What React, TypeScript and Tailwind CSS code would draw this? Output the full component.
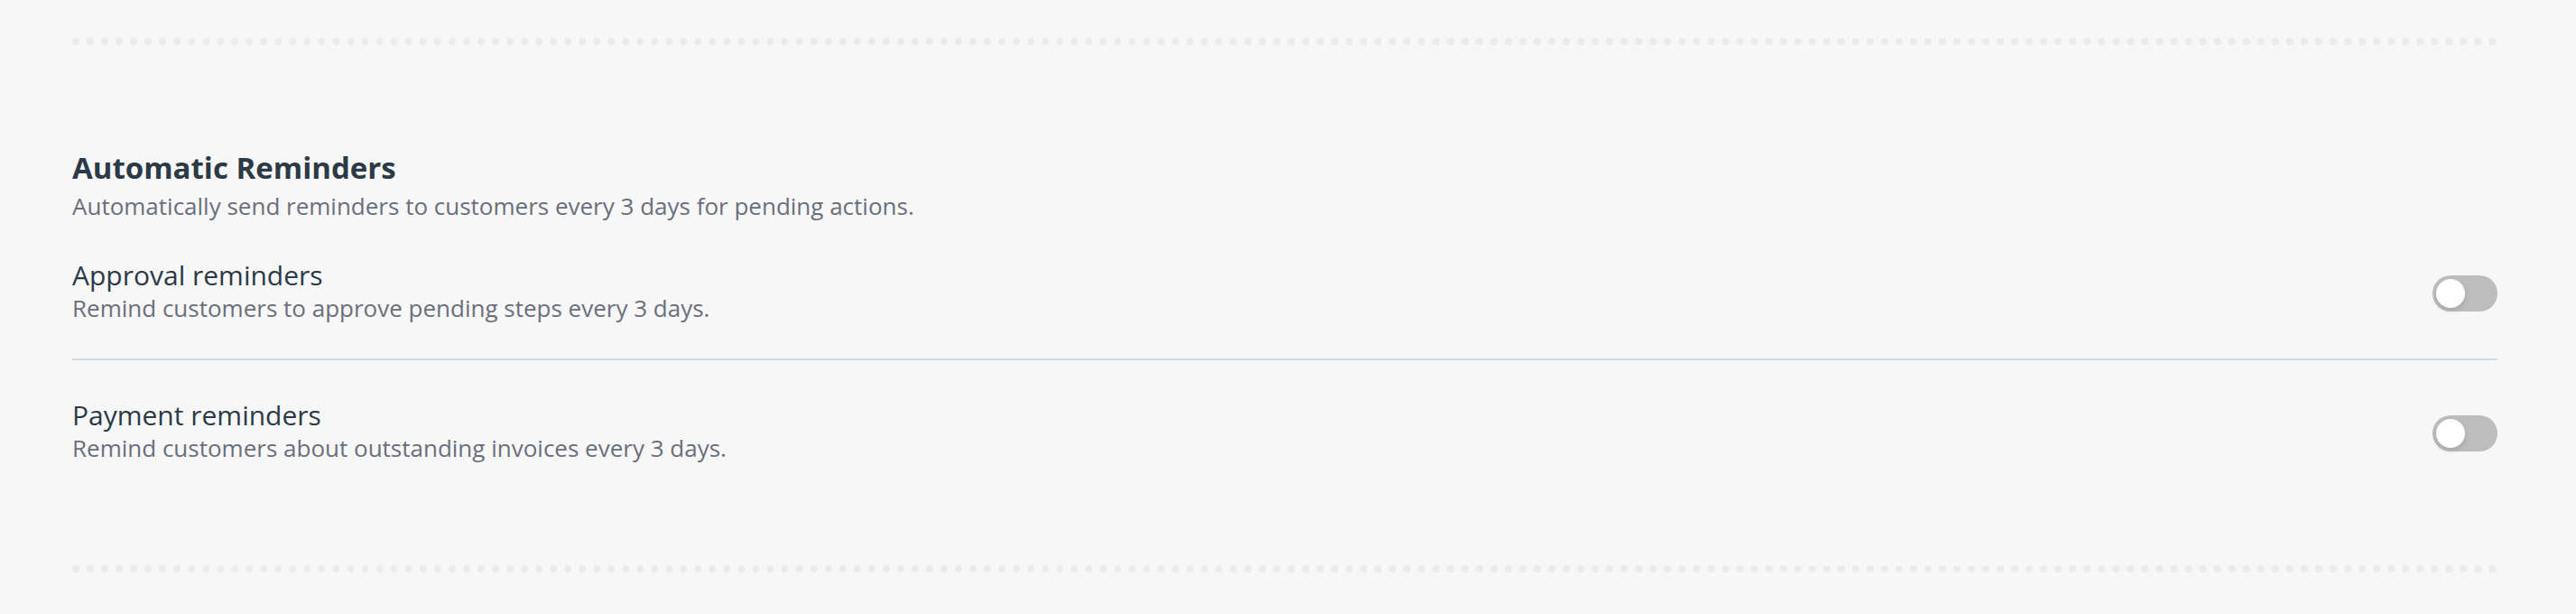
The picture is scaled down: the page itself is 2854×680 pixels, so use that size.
import React from "react";

const font = { fontFamily: '"Open Sans", "Liberation Sans", sans-serif' };

function Toggle() {
  return (
    <div className="relative mt-[4px] h-[40px] w-[72px] shrink-0 rounded-full bg-[#bdbdbd]">
      <div className="absolute left-[4px] top-[4px] h-[32px] w-[32px] rounded-full bg-white shadow-[0_3px_6px_rgba(0,0,0,0.12)]" />
    </div>
  );
}

function Row({ title, desc }: { title: string; desc: string }) {
  return (
    <div className="flex items-center justify-between">
      <div className="flex flex-col">
        <div className="text-[30px] leading-[36px] text-[#2b3a46]">{title}</div>
        <div className="mt-[1px] text-[26px] leading-[34px] text-[#6b6e7b]">{desc}</div>
      </div>
      <Toggle />
    </div>
  );
}

export default function App() {
  return (
    <div className="min-h-[680px] w-full bg-[#f7f7f7] pl-[80px] pr-[87px] pt-[42px]" style={font}>
      <div className="border-t-[8px] border-dotted border-[#ebebeb]" />
      <div className="pt-[116px]">
        <div className="text-[33px] font-bold leading-[40px] text-[#2b3a46]">Automatic Reminders</div>
        <div className="mt-[5px] text-[26px] leading-[34px] text-[#6b6e7b]">
          Automatically send reminders to customers every 3 days for pending actions.
        </div>
      </div>
      <div className="mt-[42px]">
        <Row title="Approval reminders" desc="Remind customers to approve pending steps every 3 days." />
      </div>
      <div className="mt-[39px] h-[2px] bg-[#d2d8e2]" />
      <div className="mt-[43px]">
        <Row title="Payment reminders" desc="Remind customers about outstanding invoices every 3 days." />
      </div>
      <div className="mt-[113px] border-t-[8px] border-dotted border-[#ebebeb]" />
    </div>
  );
}
